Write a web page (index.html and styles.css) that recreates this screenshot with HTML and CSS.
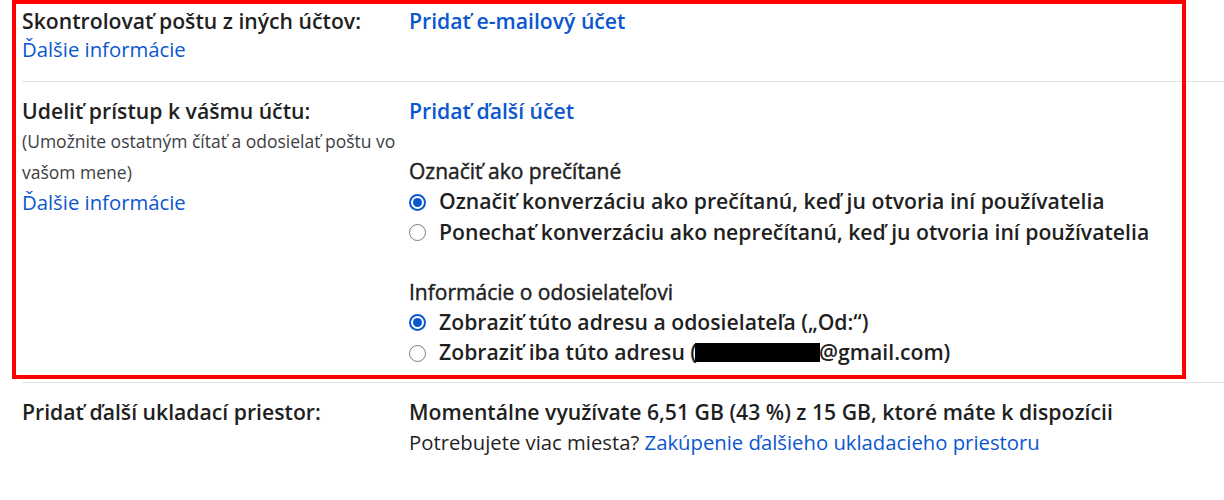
FILE: index.html
```html
<!DOCTYPE html>
<html lang="sk">
<head>
<meta charset="utf-8">
<title>Nastavenia – Účty</title>
<link rel="stylesheet" href="styles.css">
</head>
<body>
<div class="settings">
  <div class="row row-first">
    <div class="label-col">
      <div class="label">Skontrolovať poštu z iných účtov:</div>
      <a class="more" href="#">Ďalšie informácie</a>
    </div>
    <div class="value-col">
      <a class="action" href="#">Pridať e-mailový účet</a>
    </div>
  </div>

  <div class="row row-access">
    <div class="label-col">
      <div class="label">Udeliť prístup k vášmu účtu:</div>
      <div class="hint">(Umožnite ostatným čítať a odosielať poštu vo vašom mene)</div>
      <a class="more more-tight" href="#">Ďalšie informácie</a>
    </div>
    <div class="value-col">
      <a class="action" href="#">Pridať ďalší účet</a>
      <div class="group">
        <div class="group-title">Označiť ako prečítané</div>
        <div class="option"><span class="radio checked"></span><span class="opt-text">Označiť konverzáciu ako prečítanú, keď ju otvoria iní používatelia</span></div>
        <div class="option"><span class="radio"></span><span class="opt-text">Ponechať konverzáciu ako neprečítanú, keď ju otvoria iní používatelia</span></div>
      </div>
      <div class="group">
        <div class="group-title">Informácie o odosielateľovi</div>
        <div class="option"><span class="radio checked"></span><span class="opt-text">Zobraziť túto adresu a odosielateľa („Od:“)</span></div>
        <div class="option"><span class="radio"></span><span class="opt-text">Zobraziť iba túto adresu (<span class="redacted"></span>@gmail.com)</span></div>
      </div>
    </div>
  </div>

  <div class="row row-storage">
    <div class="label-col">
      <div class="label">Pridať ďalší ukladací priestor:</div>
    </div>
    <div class="value-col">
      <div class="storage">Momentálne využívate 6,51 GB (43 %) z 15 GB, ktoré máte k dispozícii</div>
      <div class="storage-more">Potrebujete viac miesta? <a class="more" href="#">Zakúpenie ďalšieho ukladacieho priestoru</a></div>
    </div>
  </div>

  <div class="highlight"></div>
</div>
</body>
</html>
```
FILE: styles.css
```css
html, body {
  margin: 0;
  padding: 0;
  background: #ffffff;
}

body {
  font-family: "Open Sans", "Noto Sans", sans-serif;
  color: #1f1f1f;
}

.settings {
  position: relative;
  width: 1224px;
}

.row {
  display: grid;
  grid-template-columns: 387px 1fr;
  margin-left: 22px;
  border-bottom: 1px solid #e3e3e3;
}

.row-first {
  padding: 6px 0 17px;
}

.row-access {
  padding: 14px 0 15px;
}

.row-storage {
  border-bottom: none;
  padding: 14px 0 20px;
}

.label-col,
.value-col {
  display: flex;
  flex-direction: column;
  align-items: flex-start;
}

.label {
  font-size: 21.2px;
  font-weight: 600;
  line-height: 29px;
  color: #1f1f1f;
}

.row-access .label,
.row-storage .label {
  line-height: 30px;
}

a {
  text-decoration: none;
}

.more {
  font-size: 20.3px;
  font-weight: 400;
  line-height: 29px;
  color: #0b57d0;
}

.more-tight {
  line-height: 30px;
  margin-top: -1px;
}

.action {
  font-size: 21.2px;
  font-weight: 600;
  line-height: 29px;
  color: #0b57d0;
}

.row-access .action {
  line-height: 30px;
}

.hint {
  font-size: 17.5px;
  line-height: 31px;
  color: #3c4043;
  width: 380px;
}

.group {
  display: flex;
  flex-direction: column;
  margin-top: 30px;
}

.group-title {
  font-size: 21px;
  font-weight: 400;
  line-height: 30px;
  color: #1f1f1f;
  -webkit-text-stroke: 0.45px #1f1f1f;
}

.option {
  display: flex;
  align-items: center;
  gap: 13px;
  height: 30px;
}

.option + .option {
  margin-top: 0.5px;
}

.opt-text {
  font-size: 21.2px;
  font-weight: 600;
  line-height: 30px;
  white-space: nowrap;
  color: #1f1f1f;
}

.radio {
  position: relative;
  flex: none;
  width: 17px;
  height: 17px;
  box-sizing: border-box;
  border: 1.5px solid #7b7b7b;
  border-radius: 50%;
  margin-top: 2px;
  background: #fff;
}

.radio.checked {
  border: 2px solid #0b57d0;
}

.radio.checked::after {
  content: "";
  position: absolute;
  left: 50%;
  top: 50%;
  width: 9px;
  height: 9px;
  margin: -4.5px 0 0 -4.5px;
  border-radius: 50%;
  background: #0b57d0;
}

.redacted {
  display: inline-block;
  width: 125px;
  height: 19px;
  background: #000;
  vertical-align: -2px;
  margin: 0 -1px 0 -2px;
}

.storage {
  font-size: 21.2px;
  font-weight: 600;
  line-height: 30px;
  color: #1f1f1f;
}

.storage-more {
  font-size: 20.3px;
  line-height: 30px;
  color: #1f1f1f;
}

.storage-more .more {
  line-height: 30px;
}

.highlight {
  position: absolute;
  left: 12px;
  top: 0;
  width: 1174px;
  height: 379px;
  box-sizing: border-box;
  border: 4px solid #ff0000;
  pointer-events: none;
}
```
